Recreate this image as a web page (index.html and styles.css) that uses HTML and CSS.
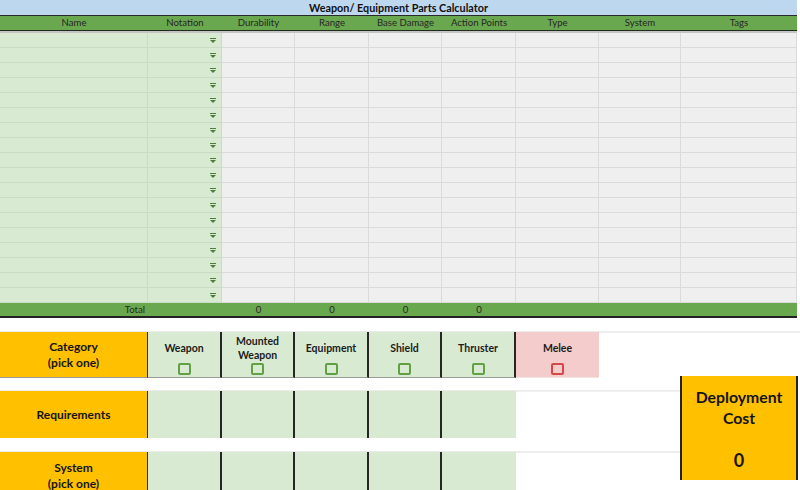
FILE: index.html
```html
<!DOCTYPE html>
<html lang="en">
<head>
<meta charset="utf-8">
<title>Weapon/ Equipment Parts Calculator</title>
<link rel="stylesheet" href="styles.css">
</head>
<body>
<div class="sheet">
  <div class="title">Weapon/ Equipment Parts Calculator</div>
  <div class="row head">
    <span>Name</span><span>Notation</span><span>Durability</span><span>Range</span><span>Base Damage</span><span>Action Points</span><span>Type</span><span>System</span><span>Tags</span>
  </div>
  <div class="data">
    <div class="row"><span class="g"></span><span class="g dd"></span><span></span><span></span><span></span><span></span><span></span><span></span><span></span></div>
    <div class="row"><span class="g"></span><span class="g dd"></span><span></span><span></span><span></span><span></span><span></span><span></span><span></span></div>
    <div class="row"><span class="g"></span><span class="g dd"></span><span></span><span></span><span></span><span></span><span></span><span></span><span></span></div>
    <div class="row"><span class="g"></span><span class="g dd"></span><span></span><span></span><span></span><span></span><span></span><span></span><span></span></div>
    <div class="row"><span class="g"></span><span class="g dd"></span><span></span><span></span><span></span><span></span><span></span><span></span><span></span></div>
    <div class="row"><span class="g"></span><span class="g dd"></span><span></span><span></span><span></span><span></span><span></span><span></span><span></span></div>
    <div class="row"><span class="g"></span><span class="g dd"></span><span></span><span></span><span></span><span></span><span></span><span></span><span></span></div>
    <div class="row"><span class="g"></span><span class="g dd"></span><span></span><span></span><span></span><span></span><span></span><span></span><span></span></div>
    <div class="row"><span class="g"></span><span class="g dd"></span><span></span><span></span><span></span><span></span><span></span><span></span><span></span></div>
    <div class="row"><span class="g"></span><span class="g dd"></span><span></span><span></span><span></span><span></span><span></span><span></span><span></span></div>
    <div class="row"><span class="g"></span><span class="g dd"></span><span></span><span></span><span></span><span></span><span></span><span></span><span></span></div>
    <div class="row"><span class="g"></span><span class="g dd"></span><span></span><span></span><span></span><span></span><span></span><span></span><span></span></div>
    <div class="row"><span class="g"></span><span class="g dd"></span><span></span><span></span><span></span><span></span><span></span><span></span><span></span></div>
    <div class="row"><span class="g"></span><span class="g dd"></span><span></span><span></span><span></span><span></span><span></span><span></span><span></span></div>
    <div class="row"><span class="g"></span><span class="g dd"></span><span></span><span></span><span></span><span></span><span></span><span></span><span></span></div>
    <div class="row"><span class="g"></span><span class="g dd"></span><span></span><span></span><span></span><span></span><span></span><span></span><span></span></div>
    <div class="row"><span class="g"></span><span class="g dd"></span><span></span><span></span><span></span><span></span><span></span><span></span><span></span></div>
    <div class="row"><span class="g"></span><span class="g dd"></span><span></span><span></span><span></span><span></span><span></span><span></span><span></span></div>
  </div>
  <div class="row total">
    <span class="tlabel">Total</span><span></span><span>0</span><span>0</span><span>0</span><span>0</span><span></span><span></span><span></span>
  </div>
</div>

<div class="form">
  <div class="spacer full"></div>

  <div class="label cat">Category<br>(pick one)</div>
  <div class="opt"><span class="olbl">Weapon</span><span class="box"></span></div>
  <div class="opt"><span class="olbl">Mounted<br>Weapon</span><span class="box"></span></div>
  <div class="opt"><span class="olbl">Equipment</span><span class="box"></span></div>
  <div class="opt"><span class="olbl">Shield</span><span class="box"></span></div>
  <div class="opt"><span class="olbl">Thruster</span><span class="box"></span></div>
  <div class="opt melee"><span class="olbl">Melee</span><span class="box"></span></div>
  <div class="blank wide2"></div>

  <div class="spacer part"></div>

  <div class="label">Requirements</div>
  <div class="cell"></div>
  <div class="cell"></div>
  <div class="cell"></div>
  <div class="cell"></div>
  <div class="cell last"></div>
  <div class="blank wide2"></div>

  <div class="deploy">
    <div class="dtitle">Deployment<br>Cost</div>
    <div class="dval">0</div>
  </div>

  <div class="spacer part"></div>

  <div class="label">System<br>(pick one)</div>
  <div class="cell"></div>
  <div class="cell"></div>
  <div class="cell"></div>
  <div class="cell"></div>
  <div class="cell last"></div>
  <div class="blank wide2"></div>
</div>
</body>
</html>
```
FILE: styles.css
```css
* { box-sizing: border-box; }

body {
  margin: 0;
  background: #ffffff;
  font-family: Lato, "Open Sans", sans-serif;
  color: #1c1c1c;
  overflow: hidden;
}

.sheet { width: 797px; }

.title {
  height: 16px;
  line-height: 15px;
  background: #bdd7ee;
  border-bottom: 1px solid #2a2a2a;
  text-align: center;
  font-weight: 700;
  font-size: 10.8px;
  color: #111;
}

.row {
  display: grid;
  grid-template-columns: 148px 74px 73px 74px 73px 74px 83px 82px 116px;
}

.head {
  height: 15px;
  background: #6aa84f;
  border-bottom: 1px solid #1f2a1a;
}

.head span {
  font-size: 9.6px;
  line-height: 14px;
  text-align: center;
  color: #262626;
}

.data { border-top: 2px solid #c4c4c4; }

.data span {
  height: 15px;
  background: #efefef;
  border-right: 1px solid #dadada;
  border-bottom: 1px solid #dadada;
}

.data span.g {
  background: #d9ead3;
  border-color: #cadcc2;
}

.data span.dd {
  display: flex;
  flex-direction: column;
  align-items: flex-end;
  justify-content: center;
  padding-right: 5px;
  padding-top: 1px;
}

.data span.dd::before {
  content: "";
  width: 6px;
  height: 1px;
  background: #4f7d3c;
}

.data span.dd::after {
  content: "";
  margin-top: 1px;
  width: 0;
  height: 0;
  border-left: 3px solid transparent;
  border-right: 3px solid transparent;
  border-top: 3px solid #4f7d3c;
}

.total {
  margin-top: -1px;
  height: 16px;
  background: #6aa84f;
  border-top: 1px solid #222;
  border-bottom: 2px solid #222;
}

.total span {
  font-size: 9.6px;
  line-height: 13px;
  text-align: center;
  color: #262626;
}

.total span.tlabel {
  text-align: right;
  padding-right: 3px;
}

/* lower form */
.form {
  display: grid;
  width: 800px;
  grid-template-columns: 148px 74px 73px 74px 73px 74px 83px 82px 119px;
  grid-template-rows: 14px 46px 13px 47px 14px 47px;
}

.spacer { background: #fff; }
.spacer.full { grid-column: 1 / -1; border-bottom: 1px solid #ececec; }
.spacer.part { grid-column: 1 / 9; border-bottom: 1px solid #ececec; }

.label {
  grid-column: 1;
  background: #ffc000;
  border-right: 1px solid #2a2a2a;
  display: flex;
  align-items: center;
  justify-content: center;
  text-align: center;
  font-weight: 700;
  font-size: 12px;
  line-height: 16px;
  color: #141414;
}

.label.cat { border-bottom: 1px solid #9a9a9a; }

.opt {
  background: #d9ead3;
  border-right: 2px solid #262626;
  border-bottom: 1px solid #9a9a9a;
  display: flex;
  flex-direction: column;
  align-items: center;
  padding-bottom: 2px;
}

.opt.melee {
  background: #f4cccc;
  border-right: none;
  border-bottom: 1px solid #f0e4e4;
}

.olbl {
  flex: 1;
  display: flex;
  align-items: center;
  justify-content: center;
  text-align: center;
  font-weight: 700;
  font-size: 10.5px;
  line-height: 14px;
  color: #1c1c1c;
  padding-top: 1px;
}

.box {
  width: 13px;
  height: 12px;
  border: 2px solid #62a046;
  border-radius: 2px;
}

.melee .box { border-color: #d64848; }

.cell {
  background: #d9ead3;
  border-right: 2px solid #262626;
}

.cell.last { border-right: none; }

.blank {
  background: #fff;
  border-top: 1px solid #efefef;
}

.blank.wide2 { grid-column: span 2; }

.deploy {
  grid-column: 9;
  grid-row: 3 / 7;
  align-self: start;
  margin-top: -2px;
  margin-left: -1px;
  width: 118px;
  height: 104px;
  background: #ffc000;
  border-left: 2px solid #222;
  border-right: 2px solid #222;
  display: flex;
  flex-direction: column;
  align-items: center;
  text-align: center;
  font-weight: 700;
  color: #141414;
  position: relative;
  z-index: 1;
}

.dtitle {
  margin-top: 10px;
  font-size: 15.8px;
  line-height: 21px;
}

.dval {
  margin-top: 21px;
  font-size: 18px;
  line-height: 22px;
}
```
